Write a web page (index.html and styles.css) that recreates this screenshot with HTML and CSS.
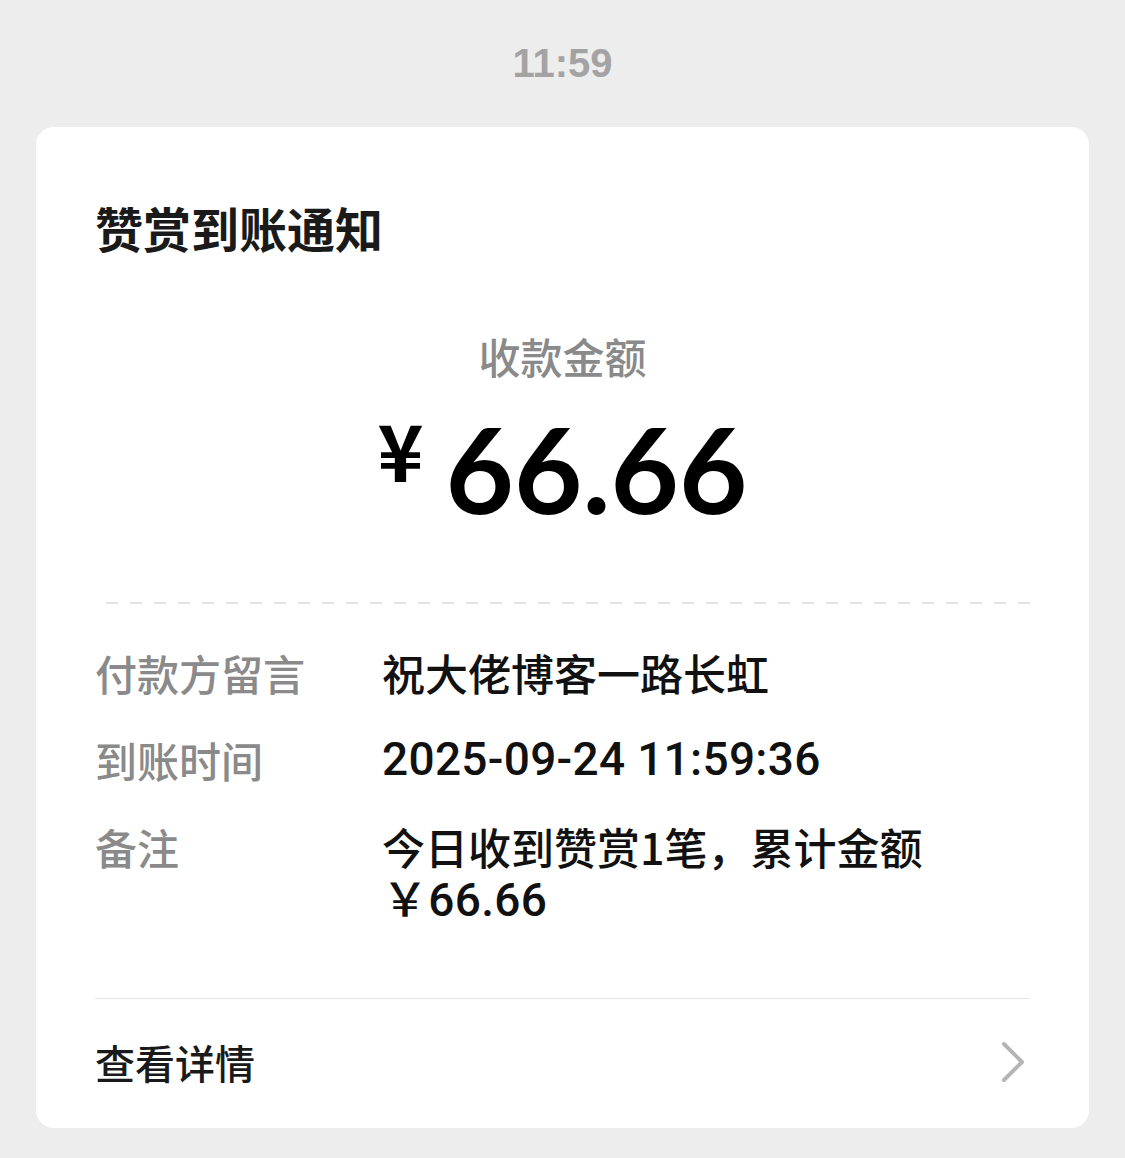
FILE: index.html
```html
<!DOCTYPE html>
<html lang="zh-CN">
<head>
    <meta charset="UTF-8"/>
    <title>赞赏到账通知</title>
    <link rel="stylesheet" href="styles.css">
</head>
<body>
<div class="time">11:59</div>

<div class="card">
    <h2 class="title">赞赏到账通知</h2>

    <div class="amount-label">收款金额</div>
    <div class="amount">
        <span class="yen">¥</span>
        <span class="num">66.66</span>
    </div>

    <div class="dash"></div>

    <div class="rows">
        <div class="row">
            <div class="label">付款方留言</div>
            <div class="value">祝大佬博客一路长虹</div>
        </div>
        <div class="row">
            <div class="label">到账时间</div>
            <div class="value latin">2025-09-24 11:59:36</div>
        </div>
        <div class="row">
            <div class="label">备注</div>
            <div class="value">今日收到赞赏1笔，累计金额<br/><span class="latin">￥66.66</span></div>
        </div>
    </div>

    <div class="footer">
        <span>查看详情</span>
        <svg class="chevron" width="26" height="42" viewBox="0 0 26 42">
            <path d="M4 3 L22 21 L4 39" fill="none" stroke="#b5b5b5" stroke-width="4" stroke-linecap="round" stroke-linejoin="round"/>
        </svg>
    </div>
</div>
</body>
</html>
```

FILE: styles.css
```css
body {
    margin: 0;
    background-color: #ededed;
    font-family: "Liberation Sans", "Noto Sans CJK SC", sans-serif;
    color: #111;
    padding: 0 36px;
}

.time {
    text-align: center;
    font-size: 40px;
    font-weight: bold;
    color: #a3a3a3;
    padding-top: 40px;
    height: 127px;
    box-sizing: border-box;
    line-height: 46px;
}

.card {
    background-color: white;
    border-radius: 18px;
    padding: 67px 59px 0;
}

.title {
    margin: 0;
    font-size: 48px;
    font-weight: bold;
    line-height: 66px;
    font-family: "Noto Sans CJK SC", sans-serif;
    color: #1a1a1a;
}

.amount-label {
    margin-top: 66px;
    text-align: center;
    font-size: 42px;
    line-height: 60px;
    color: #8a8a8a;
    font-family: "Noto Sans CJK SC", sans-serif;
    font-weight: 500;
}

.amount {
    display: flex;
    justify-content: center;
    align-items: flex-start;
    gap: 22px;
    margin-top: 16px;
    color: #000;
}

.yen {
    font-family: "Noto Sans CJK SC", sans-serif;
    font-weight: bold;
    font-size: 78px;
    line-height: 80px;
    margin-top: 6px;
}

.num {
    font-family: "Lato", sans-serif;
    font-weight: bold;
    font-size: 118px;
    line-height: 134px;
}

.dash {
    margin-top: 66px;
    height: 2px;
    background-image: linear-gradient(to right, transparent 50%, #e3e3e3 50%);
    background-size: 24px 2px;
    background-position: right top;
}

.rows {
    padding-top: 43px;
    display: flex;
    flex-direction: column;
    gap: 36px;
}

.row {
    display: flex;
    font-size: 42px;
    line-height: 51px;
}

.label {
    width: 287px;
    flex-shrink: 0;
    color: #8a8a8a;
    font-family: "Noto Sans CJK SC", sans-serif;
    font-weight: 500;
}

.value {
    color: #111;
    font-family: "Noto Sans CJK SC", sans-serif;
    font-weight: 500;
    font-size: 43px;
}

.latin {
    font-family: "Roboto", "Noto Sans CJK SC", sans-serif;
    font-size: 46px;
    font-weight: 500;
    letter-spacing: 0.3px;
}

.footer {
    margin-top: 72px;
    border-top: 1px solid #e5e5e5;
    display: flex;
    justify-content: space-between;
    align-items: center;
    height: 130px;
    padding-bottom: 4px;
    box-sizing: border-box;
    font-family: "Noto Sans CJK SC", sans-serif;
    font-size: 40px;
    font-weight: 500;
    color: #1a1a1a;
}

.chevron {
    margin-right: 4px;
}
```
